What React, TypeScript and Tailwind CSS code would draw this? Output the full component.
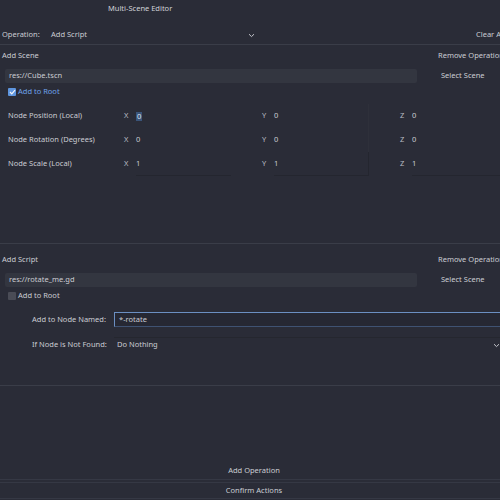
import React from "react";

const font = { fontFamily: '"Noto Sans", "Open Sans", sans-serif' };

function Chevron({ className = "" }: { className?: string }) {
  return (
    <svg className={className} width="7" height="5" viewBox="0 0 7 5" fill="none">
      <path d="M1 1.2 L3.5 3.6 L6 1.2" stroke="#c4c6cc" strokeWidth="1" />
    </svg>
  );
}

function CheckBox({ checked }: { checked: boolean }) {
  if (checked) {
    return (
      <span className="w-[8px] h-[8px] rounded-[1px] bg-[#5e95de] flex items-center justify-center">
        <svg width="7" height="6" viewBox="0 0 7 6" fill="none">
          <path d="M1 3 L2.8 4.8 L6 1.2" stroke="#f2f4f8" strokeWidth="1.2" />
        </svg>
      </span>
    );
  }
  return <span className="w-[8px] h-[8px] rounded-[1px] bg-[#4a4c56]" />;
}

function VecRow({ label, values, last }: { label: string; values: string[]; last?: boolean }) {
  const letters = ["X", "Y", "Z"];
  return (
    <div className="h-[24px] flex items-center pl-[8px]">
      <div className="w-[116px] shrink-0">{label}</div>
      {values.map((v, i) => (
        <div key={i} className="w-[138px] shrink-0 h-full flex items-center">
          <span className="w-[12px] shrink-0 text-[#b9bbc2]">{letters[i]}</span>
          <div
            className={`h-full flex items-center w-[95px] shrink-0 ${
              last ? "border-b border-[#24262f]" : ""
            } ${i === 1 ? "border-r border-[#2e303a]" : ""}`}
          >
            {label === "Node Position (Local)" && i === 0 ? (
              <span className="bg-[#3a5479] text-[#dfe5ef] px-[1px] leading-[9px]">{v}</span>
            ) : (
              <span>{v}</span>
            )}
          </div>
        </div>
      ))}
    </div>
  );
}

function SectionHeader({ title }: { title: string }) {
  return (
    <div className="h-[20px] flex items-center">
      <div className="flex-1 pl-[2px]">{title}</div>
      <div className="w-[80px] pl-[2px] whitespace-nowrap">Remove Operation</div>
    </div>
  );
}

function PathRow({ path }: { path: string }) {
  return (
    <div className="h-[14px] flex items-center">
      <div className="flex-1 ml-[5px] mr-[19px] h-full bg-[#333640] rounded-[2px] flex items-center pl-[4px]">
        {path}
      </div>
      <div className="w-[80px] pl-[5px] whitespace-nowrap">Select Scene</div>
    </div>
  );
}

export default function App() {
  return (
    <div
      className="w-[500px] h-[500px] overflow-hidden bg-[#2a2c37] text-[#cbcdd3] text-[7.5px] leading-none"
      style={font}
    >
      <div className="w-[516px] h-[500px] flex flex-col">
        {/* Title */}
        <div className="h-[18px] flex items-center pl-[108px] text-[#d0d2d8]">Multi-Scene Editor</div>

        {/* Operation row */}
        <div className="mt-[8px] h-[19px] flex items-center border-b border-[#3a3d48]">
          <span className="pl-[2px] w-[46px]">Operation:</span>
          <div className="w-[214px] flex items-center justify-between pl-[5px] pr-[5px]">
            <span>Add Script</span>
            <Chevron />
          </div>
          <div className="flex-1" />
          <span className="w-[40px] whitespace-nowrap">Clear All</span>
        </div>

        {/* Add Scene section */}
        <div className="h-[199px] border-b border-[#3a3d48] flex flex-col">
          <div className="mt-[1px]">
            <SectionHeader title="Add Scene" />
          </div>
          <div className="mt-[3px]">
            <PathRow path="res://Cube.tscn" />
          </div>
          <div className="mt-[2px] h-[14px] flex items-center gap-[2px] pl-[8px] text-[#6fa3ec]">
            <CheckBox checked />
            <span>Add to Root</span>
          </div>
          <div className="mt-[5px]">
            <VecRow label="Node Position (Local)" values={["0", "0", "0"]} />
            <VecRow label="Node Rotation (Degrees)" values={["0", "0", "0"]} />
            <VecRow label="Node Scale (Local)" values={["1", "1", "1"]} last />
          </div>
        </div>

        {/* Add Script section */}
        <div className="h-[142px] border-b border-[#3a3d48] flex flex-col">
          <div className="mt-[6px]">
            <SectionHeader title="Add Script" />
          </div>
          <div className="mt-[3px]">
            <PathRow path="res://rotate_me.gd" />
          </div>
          <div className="mt-[2px] h-[14px] flex items-center gap-[2px] pl-[8px]">
            <CheckBox checked={false} />
            <span>Add to Root</span>
          </div>
          <div className="mt-[9px] h-[15px] flex items-center">
            <span className="pl-[32px] w-[114px] whitespace-nowrap">Add to Node Named:</span>
            <div className="flex-1 h-full border-t border-l border-[#6b8fc2] border-b-[#3f5272] border-b bg-[#262833] flex items-center pl-[4px]">
              *-rotate
            </div>
          </div>
          <div className="mt-[10px] h-[15px] flex items-center">
            <span className="pl-[32px] w-[114px] whitespace-nowrap">If Node is Not Found:</span>
            <div className="w-[389px] h-full flex items-center justify-between pl-[3px] pr-[3px] border-t border-[#25272f]">
              <span>Do Nothing</span>
              <Chevron />
            </div>
          </div>
        </div>

        <div className="flex-1" />

        {/* Bottom buttons */}
        <div className="w-[500px] h-[17px] flex items-center justify-center border-b border-[#353844] pl-[8px]">
          Add Operation
        </div>
        <div className="w-[500px] mt-[2px] h-[17px] flex items-center justify-center border-t border-b border-[#353844] pl-[8px]">
          Confirm Actions
        </div>
        <div className="h-[1px]" />
      </div>
    </div>
  );
}
